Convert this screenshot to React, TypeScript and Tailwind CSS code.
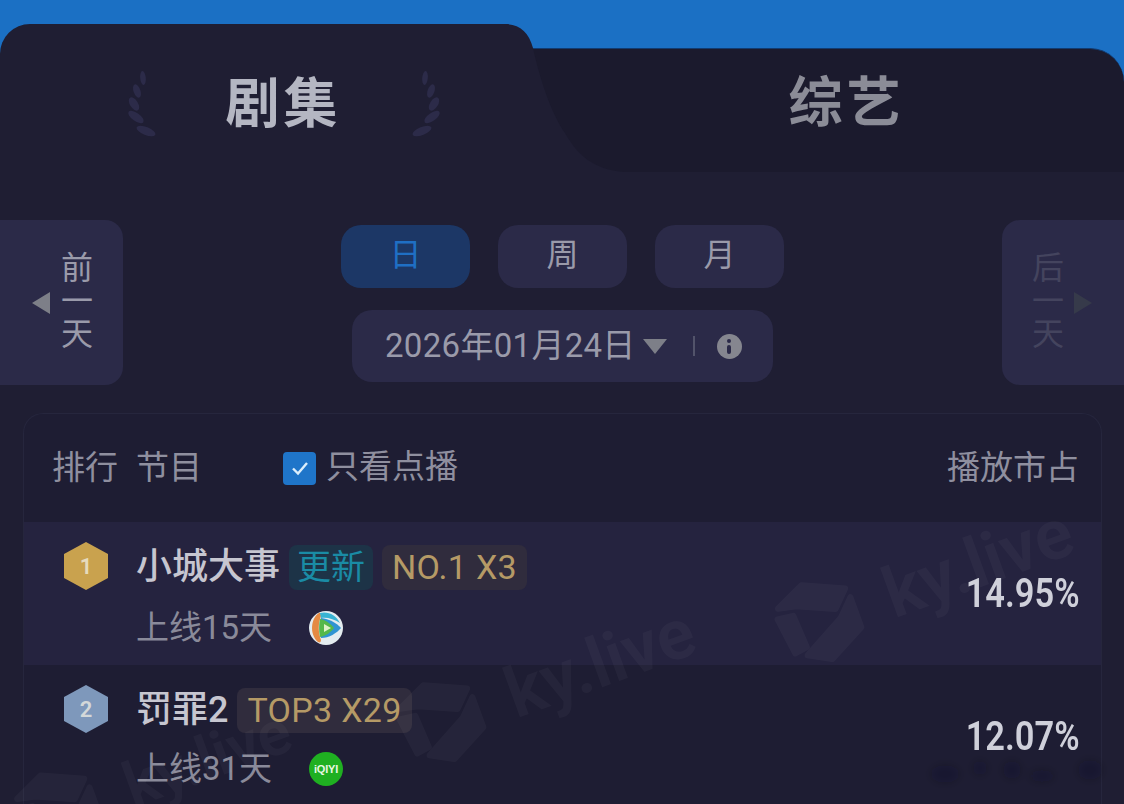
import React from "react";

const FONT = 'Roboto, "Noto Sans CJK SC", sans-serif';

function Laurel({ flip }: { flip?: boolean }) {
  return (
    <svg width="32" height="68" viewBox="0 0 32 68" className={flip ? "-scale-x-100" : ""}>
      <g fill="#2c2b49">
        <ellipse cx="17" cy="8" rx="2.8" ry="7" transform="rotate(-5 17 8)" />
        <ellipse cx="11" cy="21" rx="3.4" ry="7" transform="rotate(-20 11 21)" />
        <ellipse cx="8" cy="34" rx="4" ry="7.5" transform="rotate(-32 8 34)" />
        <ellipse cx="10" cy="47" rx="4" ry="9" transform="rotate(-55 10 47)" />
        <ellipse cx="20" cy="61" rx="4" ry="10" transform="rotate(-68 20 61)" />
      </g>
    </svg>
  );
}

function Hex({ color, n }: { color: string; n: number }) {
  return (
    <svg width="44" height="48" viewBox="0 0 44 48" className="shrink-0">
      <path d="M22 0 44 12v24L22 48 0 36V12z" fill={color} />
      <text x="22" y="32" textAnchor="middle" fontSize="22" fontWeight="600" fill="#f0eee4" fillOpacity="0.75" fontFamily="Roboto">
        {n}
      </text>
    </svg>
  );
}

function TencentLogo() {
  return (
    <svg width="36" height="36" viewBox="0 0 36 36" className="-ml-[1px]">
      <circle cx="18" cy="18" r="17" fill="#e4ecf0" />
      <path d="M11 3C3 8 1 24 10 32c2 1 3 0 3-2-3-8-3-16 0-24 0-2-1-4-2-3z" fill="#e58a43" />
      <path d="M12 3c8-2 16 2 20 10-6-4-13-6-19-5z" fill="#38b3d3" />
      <path d="M13 8c8 1 16 5 20 10-4 5-12 10-20 10-2-6-2-14 0-20z" fill="#2f94d2" />
      <path d="M12 9c6 1 11 5 14 9-3 4-8 8-14 9-1-5-1-13 0-18z" fill="#55b84a" />
      <path d="M16 14l7 4-7 4z" fill="#dff2c8" />
    </svg>
  );
}

function IqiyiLogo() {
  return (
    <div className="flex h-[34px] w-[34px] items-center justify-center rounded-full bg-[#1fb021]">
      <span className="text-[11px] leading-none font-bold tracking-[-0.2px] text-[#eaf8e4] [font-family:'Liberation_Sans']">iQIYI</span>
    </div>
  );
}

function KyLogo() {
  return (
    <svg width="96" height="96" viewBox="0 0 96 96" className="shrink-0">
      <g fill="#ffffff" stroke="#ffffff" strokeWidth="6" strokeLinejoin="round">
        <path d="M14 22 44 8 84 26 68 42 32 26z" />
        <path d="M10 32 26 34 28 68 15 70z" />
        <path d="M86 36 86 68 48 88 26 76 70 52z" />
      </g>
    </svg>
  );
}

function Watermark({ className, size }: { className: string; size: string }) {
  return (
    <div className={`pointer-events-none absolute flex -rotate-[20deg] items-center gap-[24px] opacity-[0.03] ${className}`}>
      <KyLogo />
      <span className={`font-semibold whitespace-nowrap text-white [font-family:Roboto] ${size}`}>ky.live</span>
    </div>
  );
}

function Tag({ children, tone }: { children: React.ReactNode; tone: "blue" | "gold" }) {
  return (
    <span
      className={
        "flex h-[45px] items-center rounded-[8px] text-[34px] " +
        (tone === "blue" ? "bg-[#1d3347] px-[8px] text-[#1a8ba5]" : "bg-[#302c3d] px-[10px] tracking-[0.3px] text-[#b59a66]")
      }
    >
      {children}
    </span>
  );
}

function Row({
  n,
  hex,
  title,
  days,
  share,
  tags,
  logo,
  subGap,
  active,
}: {
  n: number;
  hex: string;
  title: string;
  days: string;
  share: string;
  tags: React.ReactNode;
  logo: React.ReactNode;
  subGap: string;
  active?: boolean;
}) {
  return (
    <div className={"flex h-[143px] pr-[21px] pl-[40px] " + (active ? "bg-[#25233f]" : "")}>
      <div className="mt-[20px] mr-[28px]">
        <Hex color={hex} n={n} />
      </div>
      <div className="flex flex-1 flex-col pt-[22px]">
        <div className="flex h-[46px] items-center gap-[9px]">
          <span className="text-[36px] font-medium text-[#c6c6d0]">{title}</span>
          {tags}
        </div>
        <div className={"flex h-[44px] items-center text-[33px] text-[#8a8a9a] " + subGap}>
          <span className="w-[173px]">{days}</span>
          {logo}
        </div>
      </div>
      <div className="flex origin-right scale-x-[0.84] items-center text-[41px] font-semibold text-[#cfd0da]">{share}</div>
    </div>
  );
}

export default function App() {
  return (
    <div className="relative h-[804px] w-[1124px] overflow-hidden bg-[#1b70c4] pt-[24px]" style={{ fontFamily: FONT }}>
      {/* tabs */}
      <div className="relative flex h-[148px]">
        <div className="flex w-[505px] items-start justify-center gap-[68px] rounded-tl-[30px] bg-[#1f1e33] pt-[46px] pl-[62px]">
          <Laurel />
          <span className="-mt-[3px] text-[54px] leading-[76px] font-bold tracking-[4px] text-[#b4b6c2]">剧集</span>
          <Laurel flip />
        </div>
        <div className="mt-[24px] flex flex-1 items-start justify-center rounded-tr-[34px] border-t border-[#123b70] bg-[#1b1a2d] pt-[24px] pl-[64px]">
          <span className="text-[54px] leading-[62px] font-bold tracking-[4px] text-[#8b8c97]">综艺</span>
        </div>
        <svg width="120" height="148" viewBox="0 0 120 148" className="absolute top-0 left-[505px]">
          <path d="M0 0C14 0 24 8 28 24 36 60 48 92 60 109 72 130 88 146 120 148H0z" fill="#1f1e33" />
        </svg>
      </div>

      <div className="h-[632px] bg-[#1f1e33]">
        {/* date nav */}
        <div className="flex items-start justify-between pt-[48px]">
          <div className="flex h-[165px] w-[123px] items-center justify-end gap-[11px] rounded-r-[18px] bg-[#2b2a48] pr-[30px]">
            <span className="h-0 w-0 border-y-[11px] border-r-[18px] border-y-transparent border-r-[#7d7f88]" />
            <span className="-mt-[3px] w-[32px] text-[32px] leading-[33px] text-[#9a9aaa]">前一天</span>
          </div>

          <div className="flex flex-col items-center gap-[22px] pt-[5px]">
            <div className="flex gap-[28px]">
              <button className="h-[63px] w-[129px] rounded-[20px] bg-[#1c3766] pb-[3px] text-[32px] text-[#1f6fc4]">日</button>
              <button className="h-[63px] w-[129px] rounded-[20px] bg-[#2b2a48] pb-[3px] text-[32px] text-[#9a9aaa]">周</button>
              <button className="h-[63px] w-[129px] rounded-[20px] bg-[#2b2a48] pb-[3px] text-[32px] text-[#9a9aaa]">月</button>
            </div>
            <div className="flex h-[72px] w-[421px] items-center rounded-[20px] bg-[#2b2a48] pl-[33px]">
              <span className="text-[33px] tracking-[0.3px] whitespace-nowrap text-[#9a9aaa]">2026年01月24日</span>
              <span className="ml-[7px] h-0 w-0 border-x-[12px] border-t-[15px] border-x-transparent border-t-[#7d7f88]" />
              <span className="ml-[26px] h-[20px] w-[2px] bg-[#52536a]" />
              <span className="ml-[22px] flex h-[25px] w-[25px] flex-col items-center justify-center gap-[2px] rounded-full bg-[#85868f]">
                <span className="h-[4px] w-[4px] rounded-full bg-[#2b2a48]" />
                <span className="h-[9px] w-[4px] rounded-full bg-[#2b2a48]" />
              </span>
            </div>
          </div>

          <div className="flex h-[165px] w-[122px] items-center gap-[10px] rounded-l-[18px] bg-[#2b2a48] pl-[30px]">
            <span className="-mt-[3px] w-[32px] text-[32px] leading-[33px] text-[#44445e]">后一天</span>
            <span className="h-0 w-0 border-y-[11px] border-l-[18px] border-y-transparent border-l-[#363a4a]" />
          </div>
        </div>

        {/* table */}
        <div className="mt-[28px] mr-[22px] ml-[23px] rounded-t-[20px] border border-b-0 border-[#26263d] bg-[#1e1d33]">
          <div className="flex h-[108px] items-center justify-between pr-[22px] pl-[28px] text-[33px] text-[#8f8f9f]">
            <div className="flex items-center">
              <span className="w-[84px]">排行</span>
              <span className="w-[147px]">节目</span>
              <span className="flex h-[33px] w-[33px] items-center justify-center rounded-[4px] bg-[#1f75c9]">
                <svg width="22" height="22" viewBox="0 0 22 22" fill="none" stroke="#dbeefc" strokeWidth="2.4">
                  <path d="M4 11.5 9 16.5 18 6" />
                </svg>
              </span>
              <span className="ml-[10px] -mt-[3px]">只看点播</span>
            </div>
            <span>播放市占</span>
          </div>
          <Row
            n={1}
            hex="#c9a24e"
            title="小城大事"
            days="上线15天"
            share="14.95%"
            subGap="mt-[16px]"
            active
            tags={
              <>
                <Tag tone="blue">更新</Tag>
                <Tag tone="gold">NO.1 X3</Tag>
              </>
            }
            logo={<TencentLogo />}
          />
          <Row
            n={2}
            hex="#7e98bb"
            title="罚罪2"
            days="上线31天"
            share="12.07%"
            subGap="mt-[14px]"
            tags={<Tag tone="gold">TOP3 X29</Tag>}
            logo={<IqiyiLogo />}
          />
        </div>
      </div>

      {/* ky.live watermarks */}
      <Watermark className="top-[531px] left-[764px]" size="text-[70px]" />
      <Watermark className="top-[631px] left-[386px]" size="text-[70px]" />
      <Watermark className="top-[730px] left-[4px]" size="text-[62px]" />

      {/* smudged stamp, bottom right */}
      <svg width="200" height="50" viewBox="0 0 200 50" className="pointer-events-none absolute top-[748px] left-[920px]">
        <defs>
          <filter id="smudge" x="-20%" y="-60%" width="140%" height="220%">
            <feGaussianBlur stdDeviation="4" />
          </filter>
        </defs>
        <g fill="#14131f" fillOpacity="0.22" filter="url(#smudge)">
          <ellipse cx="25" cy="26" rx="14" ry="9" />
          <ellipse cx="60" cy="20" rx="7" ry="7" />
          <ellipse cx="92" cy="22" rx="9" ry="9" />
          <ellipse cx="122" cy="28" rx="12" ry="6" />
          <ellipse cx="170" cy="22" rx="12" ry="10" />
        </g>
      </svg>
    </div>
  );
}
